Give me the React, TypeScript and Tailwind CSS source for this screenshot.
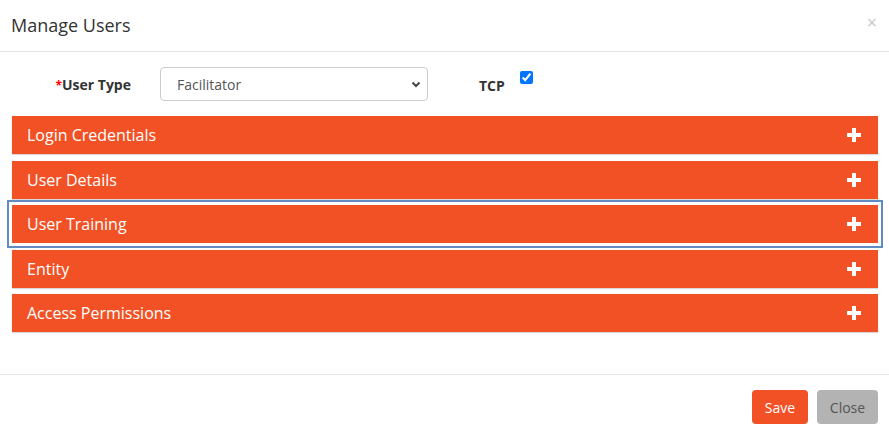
import React from "react";

const sections = [
  "Login Credentials",
  "User Details",
  "User Training",
  "Entity",
  "Access Permissions",
];

function Plus() {
  return (
    <svg width="14" height="14" viewBox="0 0 14 14" className="block">
      <rect x="5" y="0" width="4" height="14" fill="#fff" />
      <rect x="0" y="5" width="14" height="4" fill="#fff" />
    </svg>
  );
}

export default function App() {
  return (
    <div
      className="w-[889px] h-[433px] bg-white text-[#333]"
      style={{ fontFamily: '"Open Sans", "Noto Sans", sans-serif' }}
    >
      <div className="h-[52px] border-b border-[#e5e5e5] flex items-center justify-between pl-[11px] pr-[11px]">
        <div className="text-[18px] text-[#333] leading-none -mt-[1px]">Manage Users</div>
        <div className="text-[18px] leading-none text-[#c8c8c8] -mt-[8px] mr-[1px]">×</div>
      </div>

      <div className="pt-[15px] pl-[12px] pr-[11px] h-[322px]">
        <div className="flex items-center h-[34px]">
          <div className="w-[119px] text-right text-[14px] font-bold text-[#333]">
            <span className="text-[#ff0000] text-[12px]">*</span>User Type
          </div>
          <div className="ml-[29px] relative w-[268px] h-[34px] border border-[#ccc] rounded-[4px] flex items-center pl-[16px] text-[14px] text-[#555]">
            Facilitator
            <svg
              className="absolute right-[6px] top-[13px]"
              width="10"
              height="7"
              viewBox="0 0 10 7"
            >
              <path d="M1.5 1.5 L5 5 L8.5 1.5" stroke="#444" strokeWidth="2" fill="none" />
            </svg>
          </div>
          <div className="ml-[51px] text-[14px] font-bold text-[#333] mt-[2px]">TCP</div>
          <input
            type="checkbox"
            checked
            readOnly
            className="ml-[15px] w-[13px] h-[13px] m-0 self-start mt-[4px] accent-[#0075ff]"
          />
        </div>

        <div className="mt-[15px] flex flex-col gap-[6.5px]">
          {sections.map((s, i) => (
            <div
              key={s}
              className={
                i === 2
                  ? "h-[38px] bg-[#f15125] flex items-center justify-between pl-[15px] pr-[17px] shadow-[0_0_0_3px_#ffffff,0_0_0_5px_#5f8bc2]"
                  : "h-[38px] bg-[#f15125] flex items-center justify-between pl-[15px] pr-[17px] shadow-[0_1px_1px_rgba(0,0,0,0.15)]"
              }
            >
              <span className="text-white text-[16px] font-medium">{s}</span>
              <Plus />
            </div>
          ))}
        </div>
      </div>

      <div className="border-t border-[#e5e5e5] flex justify-end gap-[9px] pt-[15px] pr-[11px]">
        <button className="h-[34px] w-[56px] rounded-[4px] bg-[#f15125] text-white text-[14px] font-medium">
          Save
        </button>
        <button className="h-[34px] w-[61px] rounded-[4px] bg-[#b3b3b3] text-[#555] text-[14px]">
          Close
        </button>
      </div>
    </div>
  );
}
